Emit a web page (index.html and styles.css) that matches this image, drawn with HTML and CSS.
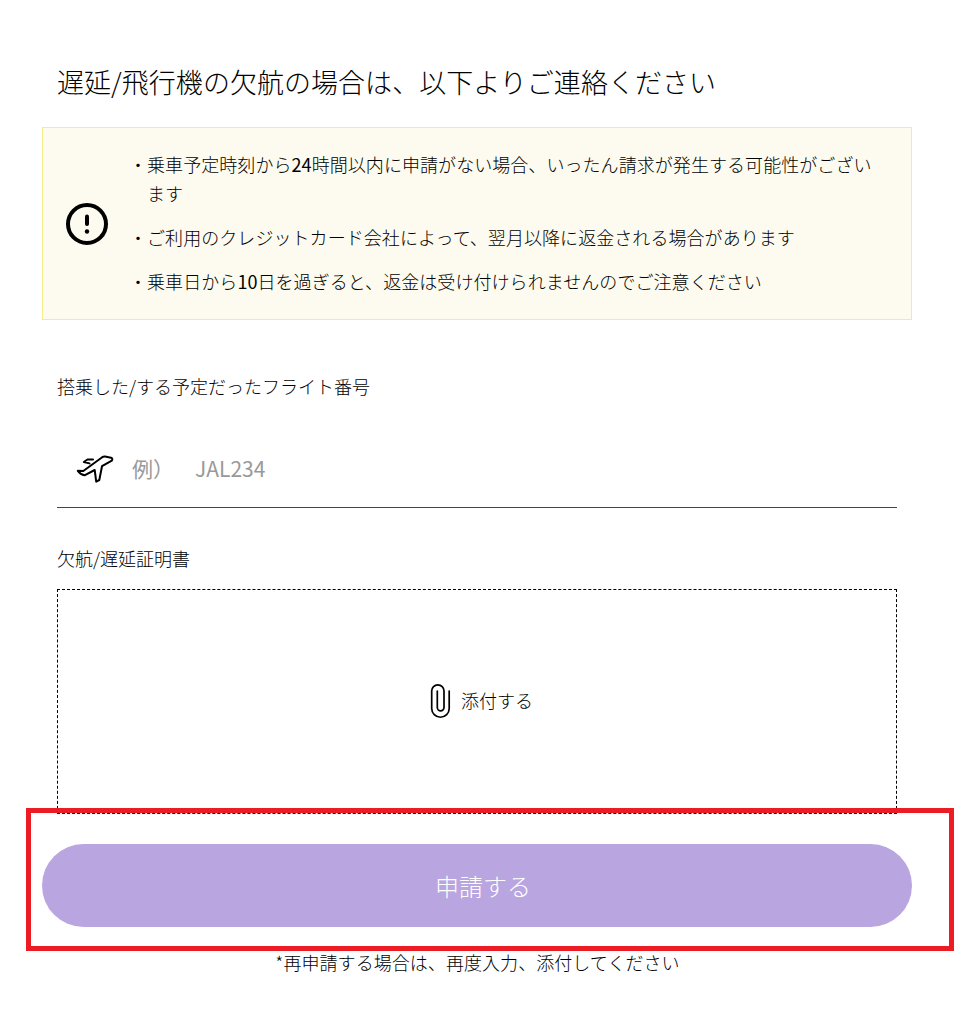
FILE: index.html
```html
<!DOCTYPE html>
<html lang="ja">
<head>
<meta charset="utf-8">
<title>遅延/欠航のご連絡</title>
<link rel="stylesheet" href="styles.css">
</head>
<body>
<main class="page">
  <h1 class="title">遅延/飛行機の欠航の場合は、以下よりご連絡ください</h1>
  <section class="notice">
    <svg class="notice-icon" viewBox="0 0 44 44" fill="none" stroke="#000" stroke-width="4" stroke-linecap="round"><circle cx="22" cy="22" r="19"/><path d="M22 14.5v7.5"/><circle cx="22" cy="29.5" r="2.2" fill="#000" stroke="none"/></svg>
    <ul class="notice-list">
      <li>乗車予定時刻から<span class="digits">24</span>時間以内に申請がない場合、いったん請求が発生する可能性がござい<br>ます</li>
      <li>ご利用のクレジットカード会社によって、翌月以降に返金される場合があります</li>
      <li>乗車日から<span class="digits">10</span>日を過ぎると、返金は受け付けられませんのでご注意ください</li>
    </ul>
  </section>
  <form class="form">
    <label class="label" for="flight">搭乗した/する予定だったフライト番号</label>
    <div class="field">
      <svg class="plane" viewBox="0 0 38 30" fill="none" stroke="#000" stroke-width="2" stroke-linejoin="round" stroke-linecap="round"><path d="M1.8 16.8L7.3 17 26.2 3.2Q27.4 2.4 29 2.5L35 3.7Q37.2 4.8 35.8 6.7L26 12.2 23.3 26 20.2 27.6 18.7 16 8.5 21.3Q4.5 20.5 1.8 16.8ZM17 5.4L11.5 5.5 7.8 8 13.5 9.4"/></svg>
      <input class="input" id="flight" type="text" placeholder="例）　JAL234">
    </div>
    <div class="label">欠航/遅延証明書</div>
    <div class="upload">
      <svg class="clip" viewBox="0 0 22 36" fill="none" stroke="#000" stroke-width="1.7" stroke-linecap="round"><path d="M20.2 8v17.5a8.75 8.75 0 0 1-17.5 0V8a6.15 6.15 0 0 1 12.3 0v16.5a3.35 3.35 0 0 1-6.7 0V8"/></svg>
      <span>添付する</span>
    </div>
  </form>
  <div class="submit-area"><button class="submit" type="button">申請する</button></div>
  <p class="note">*再申請する場合は、再度入力、添付してください</p>
</main>
</body>
</html>
```

FILE: styles.css
```css
* { box-sizing: border-box; }
body { margin: 0; background: #fff; color: #000; font-family: "Noto Sans CJK JP", sans-serif; font-weight: 300; font-size: 18px; }
.page { width: 965px; height: 1015px; padding: 62px 11px 0 26px; overflow: hidden; }
.title { margin: 0 0 25px 31px; font-size: 27px; line-height: 40px; font-weight: 300; letter-spacing: .04px; white-space: nowrap; }
.notice { display: flex; align-items: center; width: 870px; height: 193px; margin-left: 16px; padding: 0 0 2px 22px; background: #fdfbef; border: 1px solid #f7ec8c; }
.notice-icon { width: 44px; height: 44px; flex: none; margin-top: 2px; }
.notice-list { list-style: none; margin: 0 0 0 20px; padding: 0; line-height: 29px; letter-spacing: .06px; white-space: nowrap; }
.notice-list li { padding-left: 18px; text-indent: -18px; margin-bottom: 15px; }
.notice-list li:last-child { margin-bottom: 0; }
.notice-list li::before { content: "・"; }
.digits { font-weight: 400; }
.form { width: 840px; margin: 52px 0 0 31px; }
.label { display: block; height: 28px; line-height: 28px; }
.field { display: flex; align-items: center; height: 108px; padding: 30px 20px 0 19px; border-bottom: 1px solid #444; margin-bottom: 36px; }
.plane { width: 38px; height: 30px; }
.input { flex: 1; border: 0; outline: 0; padding: 0 0 1px 18px; font: inherit; font-size: 21px; font-weight: 400; text-spacing-trim: space-all; background: transparent; }
.input::placeholder { color: #999; opacity: 1; }
.upload { display: flex; align-items: center; justify-content: center; gap: 10px; height: 225px; margin-top: 17px; padding: 0 0 2px 8px; border: 1px dashed #000; }
.upload span { padding-bottom: 2px; }
.clip { width: 22px; height: 36px; }
.submit-area { position: relative; width: 928px; height: 143px; margin-top: -6px; border: 5px solid #ed1c24; padding: 31px 11px; }
/* The frame covers the lower ends of the upload border, whose last row stays visible under it. */
.submit { width: 870px; height: 83px; border: 0; border-radius: 42px; background: #b9a5e0; color: #fff; font: inherit; font-size: 24px; padding: 0 0 0 12px; }
.note { margin: -2px 25px 0 0; line-height: 26px; letter-spacing: .06px; text-align: center; }
```
